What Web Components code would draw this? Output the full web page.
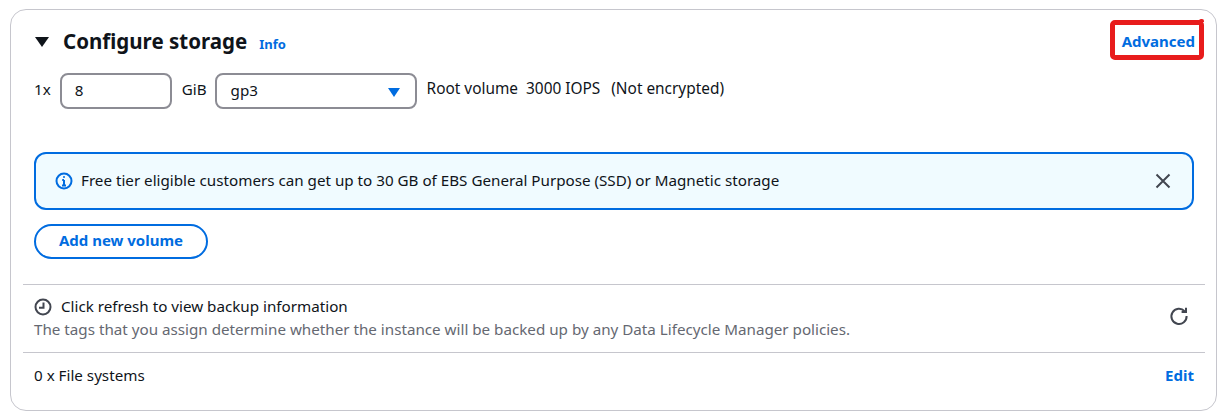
<!DOCTYPE html>
<html>
<head>
<meta charset="utf-8">
<style>
  html, body { margin: 0; background: #fff; }
  body { font: 15.2px/20px "Noto Sans", sans-serif; color: #0f141a; width: 1223px; height: 417px; overflow: hidden; }
</style>
</head>
<body>
<storage-panel></storage-panel>

<template id="storage-panel-tpl">
  <style>
    :host { display: block; box-sizing: border-box; width: 1207px; height: 402px; margin: 9px 0 0 10px; position: relative; }
    .card { box-sizing: border-box; height: 100%; border: 1px solid #c6c6cd; border-radius: 16px; padding: 0 22px 0 23px; display: flex; flex-direction: column; background: #fff; }
    .head { display: flex; align-items: center; height: 62px; margin-bottom: 1px; flex: none; }
    .caret { width: 14px; height: 10px; margin: 2px 14px 0 1px; flex: none; }
    h2 { margin: 0; font-size: 20.5px; line-height: 28px; font-weight: 700; }
    .info { margin-left: 12px; margin-top: 5px; font-size: 13px; }
    .adv { margin-right: -1px; }
    .spacer { flex: 1; }
    .row { display: flex; align-items: center; height: 36px; flex: none; }
    .notice { margin-top: 43px; flex: none; }
    .add { margin-top: 14px; flex: none; align-self: flex-start; }
    .rule { border-top: 1px solid #c6c6cd; flex: none; margin: 0 -11px; }
    .rule.first { margin-top: 25px; }
    .backup { height: 67px; box-sizing: border-box; padding-top: 11px; display: flex; justify-content: space-between; flex: none; }
    .backup .line { display: flex; align-items: center; gap: 9px; }
    .desc { color: #656871; margin-top: 3px; }
    .refresh { width: 20px; height: 20px; margin: 10px 5px 0 0; }
    .clock { width: 18px; height: 18px; margin-top: 1px; }
    .fs { display: flex; justify-content: space-between; align-items: center; height: 46px; padding-bottom: 2px; box-sizing: border-box; flex: none; }
    .mark { position: absolute; left: 1100px; top: 11px; width: 94px; height: 40px; box-sizing: border-box; border: 5px solid #e81c1c; border-radius: 5px; pointer-events: none; }
    .mark::after { content: ""; position: absolute; right: -5px; top: -6px; width: 5px; height: 3px; background: #e81c1c; border-radius: 2px 2px 0 0; }
    svg { display: block; }
  </style>
  <div class="card">
    <div class="head">
      <svg class="caret" viewBox="0 0 14 10"><path d="M0 0h14L7 10z" fill="#0f141a"/></svg>
      <h2>Configure storage</h2>
      <aws-link class="info">Info</aws-link>
      <span class="spacer"></span>
      <aws-link class="adv">Advanced</aws-link>
    </div>
    <volume-row class="row"></volume-row>
    <info-alert class="notice">Free tier eligible customers can get up to 30 GB of EBS General Purpose (SSD) or Magnetic storage</info-alert>
    <pill-button class="add">Add new volume</pill-button>
    <div class="rule first"></div>
    <div class="backup">
      <div>
        <div class="line">
          <svg class="clock" viewBox="0 0 18 18" fill="none" stroke="#424650" stroke-width="2"><circle cx="9" cy="9" r="7.5"/><path d="M9.5 4.5V9.8H5"/></svg>
          <span>Click refresh to view backup information</span>
        </div>
        <div class="desc">The tags that you assign determine whether the instance will be backed up by any Data Lifecycle Manager policies.</div>
      </div>
      <svg class="refresh" viewBox="0 0 20 20" fill="none" stroke="#424650" stroke-width="2"><path d="M15.6 5.2A7.6 7.6 0 1 0 17.6 10"/><path d="M17 1.8V6h-4.4"/></svg>
    </div>
    <div class="rule"></div>
    <div class="fs">
      <span>0 x File systems</span>
      <aws-link>Edit</aws-link>
    </div>
  </div>
  <div class="mark"></div>
</template>

<template id="volume-row-tpl">
  <style>
    :host { display: flex; align-items: center; }
    .box { box-sizing: border-box; height: 36px; padding-bottom: 2px; border: 2px solid #8c8c94; border-radius: 8px; display: flex; align-items: center; background: #fff; }
    .size { width: 112px; margin: 0 10px 0 9px; padding-left: 13px; }
    .type { width: 202px; margin: 0 10px 0 8px; padding: 0 15px 2px 14px; justify-content: space-between; }
    .note { margin-top: -5px; font-size: 15.4px; }
    .lbl { margin-top: -5px; }
    .gap { margin-left: 8px; }
    .gap.last { margin-left: 11px; }
    svg { display: block; margin-top: 4px; }
  </style>
  <span class="lbl">1x</span>
  <div class="box size">8</div>
  <span class="lbl">GiB</span>
  <div class="box type">gp3<svg width="12" height="9" viewBox="0 0 12 9"><path d="M0 0h12L6 9z" fill="#006ce0"/></svg></div>
  <span class="note">Root volume</span>
  <span class="note gap">3000 IOPS</span>
  <span class="note gap last">(Not encrypted)</span>
</template>

<template id="info-alert-tpl">
  <style>
    :host { display: flex; align-items: center; box-sizing: border-box; height: 58px; border: 2px solid #006ce0; border-radius: 12px; background: #f0fbff; padding: 0 21px 0 19px; }
    .icon { width: 18px; height: 18px; margin-right: 8px; flex: none; }
    .text { flex: 1; padding-bottom: 2px; }
    .close { width: 16px; height: 16px; flex: none; }
    svg { display: block; }
  </style>
  <svg class="icon" viewBox="0 0 18 18" fill="none" stroke="#006ce0" stroke-width="2"><circle cx="9" cy="9" r="7.5"/><path d="M9 8v5.5M7 13.5h4M7.2 8H9"/><path d="M9 4.2v1.6"/></svg>
  <span class="text"><slot></slot></span>
  <svg class="close" viewBox="0 0 16 16" fill="none" stroke="#424650" stroke-width="2"><path d="M1.5 1.5l13 13M14.5 1.5l-13 13"/></svg>
</template>

<template id="pill-button-tpl">
  <style>
    :host { display: inline-flex; align-items: center; justify-content: center; box-sizing: border-box; width: 174px; height: 35px; padding-bottom: 3px; border: 2px solid #006ce0; border-radius: 18px; color: #006ce0; font-weight: 700; font-size: 15px; background: #fff; }
  </style>
  <slot></slot>
</template>

<template id="aws-link-tpl">
  <style>
    :host { display: inline-block; color: #006ce0; font-weight: 700; font-size: 15px; }
  </style>
  <slot></slot>
</template>

<script>
  class TplElement extends HTMLElement {
    constructor () {
      super()
      const shadow = this.attachShadow({mode: 'open'})
      shadow.append(document.getElementById(this.localName + '-tpl').content.cloneNode(true))
    }
  }

  const names = ['aws-link', 'pill-button', 'info-alert', 'volume-row', 'storage-panel']
  names.forEach(name => customElements.define(name, class extends TplElement {}))
</script>
</body>
</html>
